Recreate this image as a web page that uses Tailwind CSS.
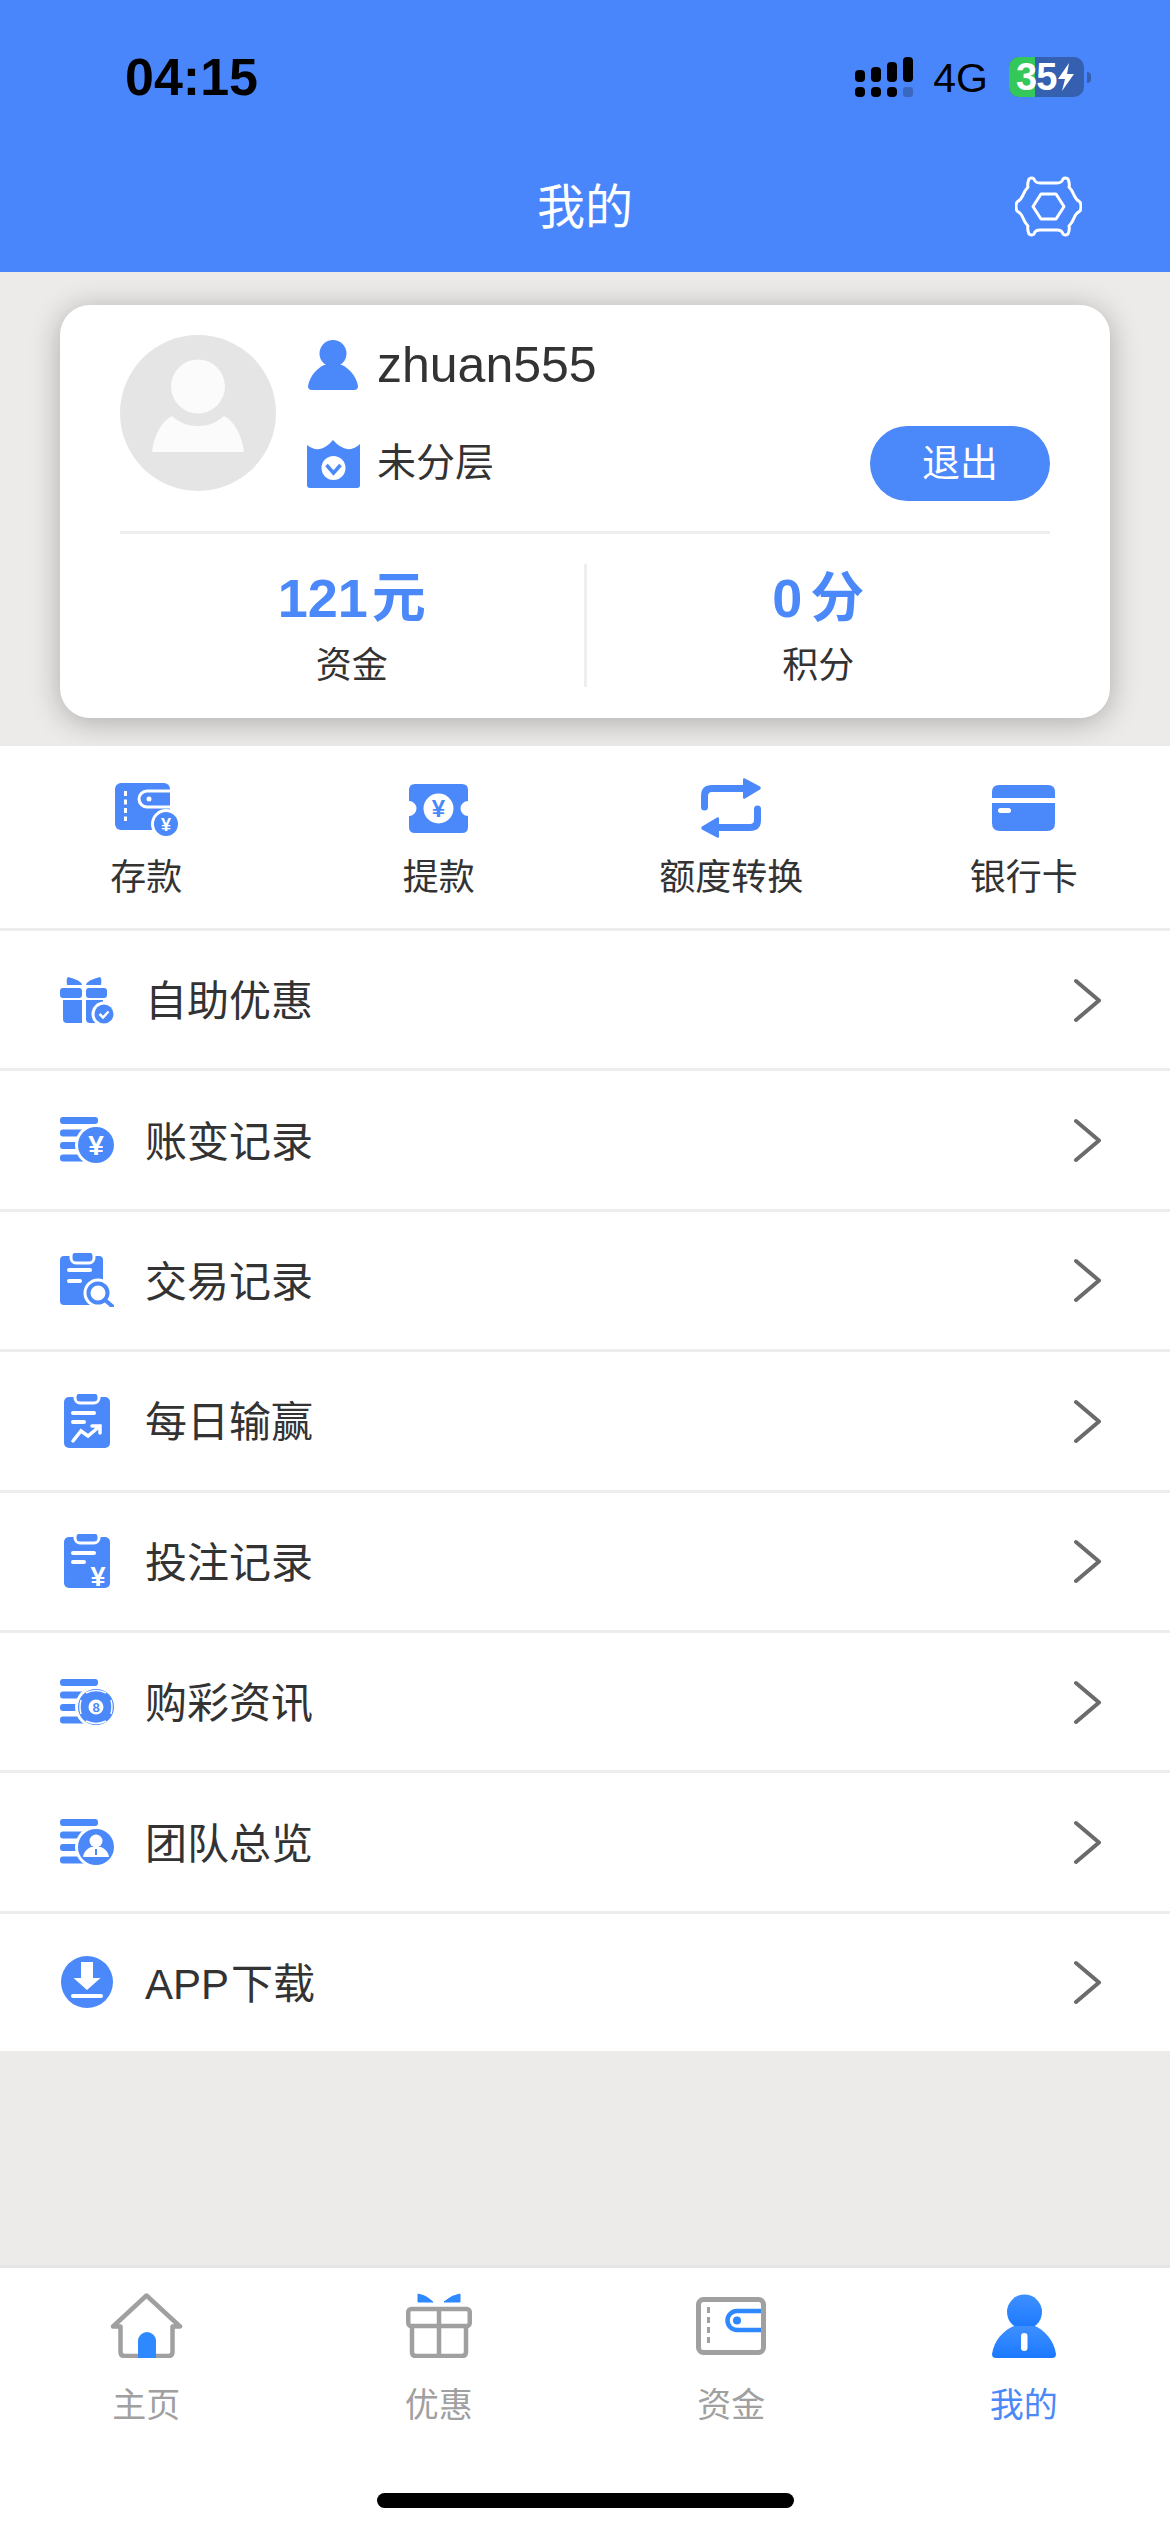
<!DOCTYPE html>
<html lang="zh-CN">
<head>
  <meta charset="UTF-8" />
  <title>我的</title>
  <meta name="viewport" content="width=device-width, initial-scale=1.0" />
  <script src="https://cdn.jsdelivr.net/npm/@tailwindcss/browser@4"></script>
</head>
<body class="bg-[#ecebe9]">
<div class="w-[1170px] h-[2532px] flex flex-col font-['Liberation_Sans','Noto_Sans_CJK_SC',sans-serif] text-[#333]">

  <!-- header -->
  <header class="relative z-10 h-[272px] shrink-0 bg-[#4a86fb]">
    <div class="h-[140px] pt-[57px] pl-[125px] pr-[79px] flex items-start justify-between">
      <span class="text-[52px] leading-[40px] font-bold text-black">04:15</span>
      <div class="flex items-start">
        <svg class="w-[58px] h-[40px]" viewBox="0 0 58 40">
          <rect x="0" y="13" width="10" height="12" rx="4" />
          <rect x="16" y="10" width="10" height="15" rx="4" />
          <rect x="32" y="5" width="10" height="20" rx="4" />
          <rect x="48" y="0" width="10" height="25" rx="4" />
          <rect x="0" y="30" width="10" height="10" rx="4" />
          <rect x="16" y="30" width="10" height="10" rx="4" />
          <rect x="32" y="30" width="10" height="10" rx="4" />
          <rect x="48" y="30" width="10" height="10" rx="3" fill="#3a68c0" />
        </svg>
        <span class="ml-[20px] mr-[21px] mt-[3px] text-[41px] leading-[36px] text-black">4G</span>
        <div class="relative w-[75px] h-[40px] rounded-[10px] overflow-hidden bg-[#3560b0] flex items-center pl-[7px]">
          <div class="absolute left-0 top-0 bottom-0 w-[26px] bg-[#34c759]"></div>
          <span class="relative text-[38px] leading-[40px] font-bold text-white tracking-[-1px]">35</span>
          <svg class="relative w-[18px] h-[28px] ml-[1px]" viewBox="0 0 18 28"><path d="M12 0 L1 16 H8 L5 28 L17 11 H10 Z" fill="#fff" /></svg>
        </div>
        <div class="ml-[3px] mt-[15px] w-[4px] h-[11px] rounded-r-full bg-[#3560b0]"></div>
      </div>
    </div>
    <div class="relative h-[132px] flex items-center justify-center">
      <span class="mt-[3px] text-[48px] text-white">我的</span>
      <svg class="absolute left-[1015px] top-[36px] w-[67px] h-[61px]" viewBox="0 0 67 61" fill="none" stroke="#fff" stroke-width="3" stroke-linejoin="round">
        <path d="M14 3 Q17 1 19 3 Q20 7 25 7 H42 Q47 7 48 3 Q50 1 53 3 Q55 8 54 11 Q57 14 59 19 Q61 24 65 26 Q67 30.5 65 35 Q61 37 59 42 Q57 47 54 50 Q55 53 53 58 Q50 60 48 58 Q47 54 42 54 H25 Q20 54 19 58 Q17 60 14 58 Q12 53 13 50 Q10 47 8 42 Q6 37 2 35 Q0 30.5 2 26 Q6 24 8 19 Q10 14 13 11 Q12 8 14 3 Z" />
        <path d="M18 30.5 L26 18 H41 L49 30.5 L41 43 H26 Z" />
      </svg>
    </div>
  </header>

  <!-- account card -->
  <section class="mx-[60px] mt-[33px] mb-[28px] h-[413px] shrink-0 rounded-[30px] bg-white px-[60px] pt-[30px] shadow-[0_4px_30px_rgba(0,0,0,0.28)]">
    <div class="flex h-[199px] border-b-[3px] border-[#eee]">
      <svg class="w-[156px] h-[156px] shrink-0" viewBox="0 0 156 156">
        <circle cx="78" cy="78" r="78" fill="#e5e5e5" />
        <ellipse cx="78" cy="51.5" rx="27" ry="27" fill="#fbfbfb" />
        <path d="M32 117 C34 100 42 86 52 81 C60 88 68 91 78 91 C88 91 96 88 104 81 C114 86 122 100 124 117 Z" fill="#fbfbfb" />
      </svg>
      <div class="flex-1 ml-[32px] pt-[5px]">
        <div class="flex items-center h-[50px]">
          <svg class="w-[50px] h-[50px]" viewBox="0 0 50 50" fill="#4b88f9">
            <circle cx="25" cy="13.5" r="13.5" />
            <path d="M0 46 C2 35 10 28 16 25 L34 25 C40 28 48 35 50 46 Q50 50 46 50 H4 Q0 50 0 46 Z" />
          </svg>
          <span class="ml-[19px] text-[50px]">zhuan555</span>
        </div>
        <div class="mt-[36px] flex items-center justify-between h-[75px]">
          <div class="flex items-center">
            <svg class="w-[53px] h-[48px] -ml-[1px]" viewBox="0 0 53 48">
              <path d="M0 5 Q6 10 13 9 Q19 8 26 0 Q33 8 40 9 Q47 10 53 4 V45 Q53 48 50 48 H3 Q0 48 0 45 Z" fill="#4b88f9" />
              <circle cx="26.5" cy="28" r="12" fill="#fff" />
              <path d="M19.5 25 L26.5 33 L33.5 25" fill="none" stroke="#4b88f9" stroke-width="3.5" />
            </svg>
            <span class="ml-[17px] text-[39px]">未分层</span>
          </div>
          <button class="w-[180px] h-[75px] rounded-full bg-[#4b88f9] text-[38px] text-white">退出</button>
        </div>
      </div>
    </div>
    <div class="mt-[30px] flex h-[123px]">
      <div class="flex-1 text-center">
        <div class="text-[54px] leading-[68px] font-bold text-[#4b88f9]">121<span class="ml-[4px]">元</span></div>
        <div class="text-[36px] leading-[68px]">资金</div>
      </div>
      <div class="w-[3px] bg-[#eee]"></div>
      <div class="flex-1 text-center">
        <div class="text-[54px] leading-[68px] font-bold text-[#4b88f9]">0<span class="ml-[8px]">分</span></div>
        <div class="text-[36px] leading-[68px]">积分</div>
      </div>
    </div>
  </section>

  <!-- quick actions -->
  <section class="h-[182px] shrink-0 bg-white grid grid-cols-4 pt-[32px]">
    <a class="flex flex-col items-center">
      <div class="h-[60px] flex items-center">
        <svg class="w-[63px] h-[56px]" viewBox="0 0 63 56">
          <rect x="0" y="3" width="55" height="47" rx="6" fill="#4b88f9" />
          <path d="M55 11 H32 A8 8 0 0 0 32 27 H55" fill="#4b88f9" stroke="#fff" stroke-width="3" />
          <circle cx="34" cy="19" r="2.5" fill="#fff" />
          <path d="M10.5 11 V41" stroke="#fff" stroke-width="3" stroke-dasharray="5 3.5" />
          <circle cx="51" cy="44" r="15" fill="#fff" />
          <circle cx="51" cy="44" r="12" fill="#4b88f9" />
          <text x="51" y="50.5" text-anchor="middle" font-size="18" font-weight="700" fill="#fff">¥</text>
        </svg>
      </div>
      <span class="mt-[15px] text-[36px] leading-[50px]">存款</span>
    </a>
    <a class="flex flex-col items-center">
      <div class="h-[60px] flex items-center">
        <svg class="w-[59px] h-[49px]" viewBox="0 0 59 49">
          <path d="M6 0 H53 Q59 0 59 6 V17 A7.5 7.5 0 0 0 59 32 V43 Q59 49 53 49 H6 Q0 49 0 43 V32 A7.5 7.5 0 0 0 0 17 V6 Q0 0 6 0 Z" fill="#4b88f9" />
          <circle cx="29.5" cy="24.5" r="15" fill="#fff" />
          <text x="29.5" y="33" text-anchor="middle" font-size="24" font-weight="700" fill="#4b88f9">¥</text>
        </svg>
      </div>
      <span class="mt-[15px] text-[36px] leading-[50px]">提款</span>
    </a>
    <a class="flex flex-col items-center">
      <div class="h-[60px] flex items-center">
        <svg class="w-[60px] h-[60px]" viewBox="0 0 60 60" fill="#4b88f9">
          <path d="M3.5 29 V18 Q3.5 10.5 11 10.5 H44" fill="none" stroke="#4b88f9" stroke-width="7" stroke-linecap="round" />
          <path d="M42 1.5 Q42 -0.5 44 0.5 L59 8.5 Q60.5 10 59 11.5 L44 20.5 Q42 21.5 42 19.5 Z" />
          <path d="M56.5 31 V42 Q56.5 49.5 49 49.5 H16" fill="none" stroke="#4b88f9" stroke-width="7" stroke-linecap="round" />
          <path d="M18 58.5 Q18 60.5 16 59.5 L1 51.5 Q-0.5 50 1 48.5 L16 39.5 Q18 38.5 18 40.5 Z" />
        </svg>
      </div>
      <span class="mt-[15px] text-[36px] leading-[50px]">额度转换</span>
    </a>
    <a class="flex flex-col items-center">
      <div class="h-[60px] flex items-center">
        <svg class="w-[63px] h-[46px]" viewBox="0 0 63 46" fill="#4b88f9">
          <path d="M0 13 V7 Q0 0 7 0 H56 Q63 0 63 7 V13 Z" />
          <path d="M0 18 H63 V38 Q63 46 55 46 H8 Q0 46 0 38 Z" />
          <rect x="6" y="23" width="13" height="5" rx="2.5" fill="#fff" />
        </svg>
      </div>
      <span class="mt-[15px] text-[36px] leading-[50px]">银行卡</span>
    </a>
  </section>

  <!-- menu -->
  <ul class="shrink-0 bg-white">
    <li class="h-[140.4px] border-t-[3px] border-[#eeedeb] flex items-center pl-[60px] pr-[69px]">
      <svg class="w-[54px] h-[54px]" viewBox="0 0 54 54" fill="#4b88f9">
        <path d="M8 4 Q6 5 7 12 H22 Q21 7 8 4 Z M40 4 Q42 5 41 12 H26 Q27 7 40 4 Z" />
        <rect x="0" y="15" width="22" height="10" rx="3" />
        <rect x="26" y="15" width="21" height="10" rx="3" />
        <path d="M3 27 H22 V50 H7 Q3 50 3 46 Z" />
        <path d="M26 27 H43 V50 H30 Q26 50 26 46 Z" />
        <circle cx="44" cy="41" r="12.5" fill="#fff" />
        <circle cx="44" cy="41" r="9.5" />
        <path d="M39.5 41 L43 44.5 L48.5 38.5" fill="none" stroke="#fff" stroke-width="2.5" />
      </svg>
      <span class="ml-[31px] mt-[4px] flex-1 text-[42px]">自助优惠</span>
      <svg class="w-[28px] h-[46px]" viewBox="0 0 28 46"><path d="M3 4 L26 23.5 L3 43" fill="none" stroke="#6b6b6b" stroke-width="4" stroke-linecap="round" stroke-linejoin="round" /></svg>
    </li>
    <li class="h-[140.4px] border-t-[3px] border-[#eeedeb] flex items-center pl-[60px] pr-[69px]">
      <svg class="w-[54px] h-[54px]" viewBox="0 0 54 54" fill="#4b88f9">
        <rect x="0" y="4" width="38" height="7" rx="3" />
        <rect x="0" y="16.5" width="30" height="7" rx="3" />
        <rect x="0" y="29" width="30" height="7" rx="3" />
        <rect x="0" y="41.5" width="30" height="7" rx="3" />
        <circle cx="36" cy="32" r="21" fill="#fff" />
        <circle cx="36" cy="32" r="18" />
        <text x="36" y="42" text-anchor="middle" font-size="28" font-weight="700" fill="#fff">¥</text>
      </svg>
      <span class="ml-[31px] mt-[4px] flex-1 text-[42px]">账变记录</span>
      <svg class="w-[28px] h-[46px]" viewBox="0 0 28 46"><path d="M3 4 L26 23.5 L3 43" fill="none" stroke="#6b6b6b" stroke-width="4" stroke-linecap="round" stroke-linejoin="round" /></svg>
    </li>
    <li class="h-[140.4px] border-t-[3px] border-[#eeedeb] flex items-center pl-[60px] pr-[69px]">
      <svg class="w-[54px] h-[54px]" viewBox="0 0 54 54" fill="#4b88f9">
        <path d="M4 3 H39 Q43 3 43 7 V52 H4 Q0 52 0 48 V7 Q0 3 4 3 Z" />
        <rect x="11" y="-2" width="23" height="12" rx="5" stroke="#fff" stroke-width="3" />
        <rect x="7" y="15" width="25" height="4" rx="2" fill="#fff" />
        <rect x="7" y="26" width="15" height="4" rx="2" fill="#fff" />
        <circle cx="38" cy="40" r="14.5" fill="#fff" />
        <circle cx="38" cy="40" r="9.5" fill="#fff" stroke="#4b88f9" stroke-width="4" />
        <path d="M45 47 L52 53" stroke="#4b88f9" stroke-width="4" stroke-linecap="round" />
      </svg>
      <span class="ml-[31px] mt-[4px] flex-1 text-[42px]">交易记录</span>
      <svg class="w-[28px] h-[46px]" viewBox="0 0 28 46"><path d="M3 4 L26 23.5 L3 43" fill="none" stroke="#6b6b6b" stroke-width="4" stroke-linecap="round" stroke-linejoin="round" /></svg>
    </li>
    <li class="h-[140.4px] border-t-[3px] border-[#eeedeb] flex items-center pl-[60px] pr-[69px]">
      <svg class="w-[54px] h-[54px]" viewBox="0 0 54 54" fill="#4b88f9">
        <rect x="4" y="3" width="46" height="51" rx="5" />
        <rect x="15" y="-2" width="24" height="11" rx="5" stroke="#fff" stroke-width="3" />
        <rect x="11" y="17" width="25" height="4" rx="2" fill="#fff" />
        <rect x="11" y="26" width="15" height="4" rx="2" fill="#fff" />
        <path d="M13 47 L21 37 L28 42 L40 32 M32 32 H40 V39" fill="none" stroke="#fff" stroke-width="3.5" stroke-linecap="round" />
      </svg>
      <span class="ml-[31px] mt-[4px] flex-1 text-[42px]">每日输赢</span>
      <svg class="w-[28px] h-[46px]" viewBox="0 0 28 46"><path d="M3 4 L26 23.5 L3 43" fill="none" stroke="#6b6b6b" stroke-width="4" stroke-linecap="round" stroke-linejoin="round" /></svg>
    </li>
    <li class="h-[140.4px] border-t-[3px] border-[#eeedeb] flex items-center pl-[60px] pr-[69px]">
      <svg class="w-[54px] h-[54px]" viewBox="0 0 54 54" fill="#4b88f9">
        <rect x="4" y="3" width="46" height="51" rx="5" />
        <rect x="15" y="-2" width="24" height="11" rx="5" stroke="#fff" stroke-width="3" />
        <rect x="11" y="17" width="25" height="4" rx="2" fill="#fff" />
        <rect x="11" y="26" width="15" height="4" rx="2" fill="#fff" />
        <text x="38" y="52" text-anchor="middle" font-size="27" font-weight="700" fill="#fff">¥</text>
      </svg>
      <span class="ml-[31px] mt-[4px] flex-1 text-[42px]">投注记录</span>
      <svg class="w-[28px] h-[46px]" viewBox="0 0 28 46"><path d="M3 4 L26 23.5 L3 43" fill="none" stroke="#6b6b6b" stroke-width="4" stroke-linecap="round" stroke-linejoin="round" /></svg>
    </li>
    <li class="h-[140.4px] border-t-[3px] border-[#eeedeb] flex items-center pl-[60px] pr-[69px]">
      <svg class="w-[54px] h-[54px]" viewBox="0 0 54 54" fill="#4b88f9">
        <rect x="0" y="4" width="38" height="7" rx="3" />
        <rect x="0" y="16.5" width="30" height="7" rx="3" />
        <rect x="0" y="29" width="30" height="7" rx="3" />
        <rect x="0" y="41.5" width="30" height="7" rx="3" />
        <circle cx="36" cy="32" r="21" fill="#fff" />
        <circle cx="36" cy="32" r="18" />
        <path d="M26 18 Q36 13 46 18 M26 46 Q36 51 46 46 M21 25 Q19 32 21 39 M51 25 Q53 32 51 39" fill="none" stroke="#fff" stroke-width="1.5" />
        <circle cx="36" cy="32" r="7.5" fill="#fff" />
        <text x="36" y="37" text-anchor="middle" font-size="13" font-weight="700">8</text>
      </svg>
      <span class="ml-[31px] mt-[4px] flex-1 text-[42px]">购彩资讯</span>
      <svg class="w-[28px] h-[46px]" viewBox="0 0 28 46"><path d="M3 4 L26 23.5 L3 43" fill="none" stroke="#6b6b6b" stroke-width="4" stroke-linecap="round" stroke-linejoin="round" /></svg>
    </li>
    <li class="h-[140.4px] border-t-[3px] border-[#eeedeb] flex items-center pl-[60px] pr-[69px]">
      <svg class="w-[54px] h-[54px]" viewBox="0 0 54 54" fill="#4b88f9">
        <rect x="0" y="4" width="38" height="7" rx="3" />
        <rect x="0" y="16.5" width="30" height="7" rx="3" />
        <rect x="0" y="29" width="30" height="7" rx="3" />
        <rect x="0" y="41.5" width="30" height="7" rx="3" />
        <circle cx="36" cy="32" r="21" fill="#fff" />
        <circle cx="36" cy="32" r="18" />
        <circle cx="36" cy="26" r="6.5" fill="#fff" />
        <path d="M23 42 Q24 35 31 32 H41 Q48 35 49 42 Z" fill="#fff" />
        <rect x="35" y="34" width="2" height="6" />
      </svg>
      <span class="ml-[31px] mt-[4px] flex-1 text-[42px]">团队总览</span>
      <svg class="w-[28px] h-[46px]" viewBox="0 0 28 46"><path d="M3 4 L26 23.5 L3 43" fill="none" stroke="#6b6b6b" stroke-width="4" stroke-linecap="round" stroke-linejoin="round" /></svg>
    </li>
    <li class="h-[140.4px] border-t-[3px] border-[#eeedeb] flex items-center pl-[60px] pr-[69px]">
      <svg class="w-[54px] h-[54px]" viewBox="0 0 54 54">
        <circle cx="27" cy="27" r="26" fill="#4b88f9" />
        <path d="M21 7 H33 V23 H40.5 L27 35 L13.5 23 H21 Z" fill="#fff" />
        <rect x="11" y="39" width="32" height="4" rx="2" fill="#fff" />
      </svg>
      <span class="ml-[31px] mt-[4px] flex-1 text-[42px]">APP<span class="ml-[2px]">下载</span></span>
      <svg class="w-[28px] h-[46px]" viewBox="0 0 28 46"><path d="M3 4 L26 23.5 L3 43" fill="none" stroke="#6b6b6b" stroke-width="4" stroke-linecap="round" stroke-linejoin="round" /></svg>
    </li>
  </ul>

  <div class="flex-1"></div>

  <!-- tab bar -->
  <nav class="h-[267px] shrink-0 border-t-[3px] border-[#e5e5e5] bg-white pt-[25px]">
    <div class="grid grid-cols-4">
      <a class="flex flex-col items-center">
        <div class="h-[65px] flex items-center">
          <svg class="w-[73px] h-[65px]" viewBox="0 0 73 65" fill="none">
            <path d="M10.5 33.5 H3 L36.5 2.5 L70 33.5 H62.5 V59 Q62.5 63 58.5 63 H14.5 Q10.5 63 10.5 59 Z" stroke="#a0a0a0" stroke-width="4.5" stroke-linejoin="round" />
            <path d="M28 65 V48 A9 9 0 0 1 46 48 V65 Z" fill="#2e88ff" />
          </svg>
        </div>
        <span class="mt-[27px] text-[34px] leading-[40px] text-[#a0a0a0]">主页</span>
      </a>
      <a class="flex flex-col items-center">
        <div class="h-[65px] flex items-center">
          <svg class="w-[66px] h-[65px]" viewBox="0 0 66 65" fill="none">
            <path d="M12 1 Q20 2 27 9 H12 Z M54 1 Q46 2 38 9 H54 Z" fill="#2e88ff" stroke="#2e88ff" stroke-width="1" stroke-linejoin="round" />
            <rect x="2.25" y="16" width="61.5" height="17" rx="3" stroke="#a0a0a0" stroke-width="4.5" />
            <path d="M6 33 V59 Q6 63 10 63 H56 Q60 63 60 59 V33 M33 16 V63" stroke="#a0a0a0" stroke-width="4.5" />
          </svg>
        </div>
        <span class="mt-[27px] text-[34px] leading-[40px] text-[#a0a0a0]">优惠</span>
      </a>
      <a class="flex flex-col items-center">
        <div class="h-[65px] flex items-center">
          <svg class="w-[70px] h-[58px]" viewBox="0 0 70 58" fill="none">
            <rect x="2.5" y="2.5" width="65" height="53" rx="5" stroke="#a0a0a0" stroke-width="5" />
            <path d="M12.5 10 V47" stroke="#a0a0a0" stroke-width="3" stroke-dasharray="6 4" />
            <path d="M65 14 H41 A9.5 9.5 0 0 0 41 33 H65" stroke="#2e88ff" stroke-width="4.5" />
            <circle cx="41" cy="23.5" r="4" fill="#2e88ff" />
          </svg>
        </div>
        <span class="mt-[27px] text-[34px] leading-[40px] text-[#a0a0a0]">资金</span>
      </a>
      <a class="flex flex-col items-center">
        <div class="h-[65px] flex items-center">
          <svg class="w-[64px] h-[64px]" viewBox="0 0 64 64">
            <defs>
              <linearGradient id="mine" x1="0" y1="0" x2="0" y2="1">
                <stop offset="0" stop-color="#3f90ff" />
                <stop offset="1" stop-color="#1a78ff" />
              </linearGradient>
            </defs>
            <circle cx="32.5" cy="18" r="17.5" fill="url(#mine)" />
            <path d="M0 60 C2 46 12 36 22 32 L43 32 C52 36 62 46 64 60 Q64 64 60 64 H4 Q0 64 0 60 Z" fill="url(#mine)" />
            <rect x="29" y="39" width="6.5" height="18" rx="3.2" fill="#fff" />
          </svg>
        </div>
        <span class="mt-[27px] text-[34px] leading-[40px] text-[#4b88f9]">我的</span>
      </a>
    </div>
    <div class="mt-[68px] mx-auto w-[417px] h-[15px] rounded-full bg-black"></div>
  </nav>
</div>
</body>
</html>
